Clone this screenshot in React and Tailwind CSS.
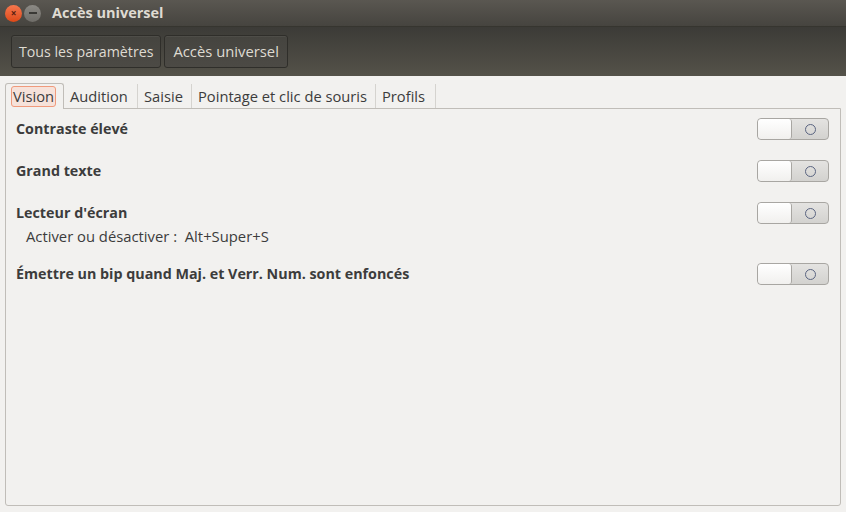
const rows = [
  { label: "Contraste élevé" },
  { label: "Grand texte" },
  { label: "Lecteur d'écran", sub: "Activer ou désactiver :  Alt+Super+S" },
  { label: "Émettre un bip quand Maj. et Verr. Num. sont enfoncés" },
];

const tabs = [
  { label: "Vision", w: "w-[59px]" },
  { label: "Audition", w: "w-[74px]" },
  { label: "Saisie", w: "w-[54px]" },
  { label: "Pointage et clic de souris", w: "w-[184px]" },
  { label: "Profils", w: "w-[60px]" },
];

function Toggle() {
  return (
    <div className="flex h-[22px] w-[72px] shrink-0 overflow-hidden rounded-[4px] border border-[#a8a6a2] bg-gradient-to-b from-[#e4e3e1] to-[#d3d2cf]">
      <div className="h-full w-[34px] rounded-[3px] border-r border-[#a8a6a2] bg-gradient-to-b from-white to-[#f1f0ee]" />
      <div className="flex flex-1 items-center justify-center">
        <span className="h-[11px] w-[11px] rounded-full border border-[#5a6480]" />
      </div>
    </div>
  );
}

export default function App() {
  return (
    <div
      className="flex h-[512px] w-[846px] flex-col bg-[#f2f1ef] text-[14px] text-[#3c3c3c]"
      style={{ fontFamily: '"Open Sans", "Noto Sans", sans-serif' }}
    >
      {/* title bar */}
      <div className="flex h-[26px] items-center bg-gradient-to-b from-[#5a5751] to-[#46443f] px-[5px]">
        <span className="flex h-[17px] w-[17px] items-center justify-center rounded-full bg-gradient-to-b from-[#f5774d] to-[#dd4814] text-[10px] font-bold leading-none text-[#5a2010]">
          ×
        </span>
        <span className="ml-[2px] flex h-[17px] w-[17px] items-center justify-center rounded-full bg-gradient-to-b from-[#8c8a85] to-[#6f6d68]">
          <span className="h-[1.5px] w-[8px] bg-[#3a3935]" />
        </span>
        <span className="ml-[11px] text-[14.5px] font-bold text-[#dfdbd2]">Accès universel</span>
      </div>

      {/* toolbar */}
      <div className="flex h-[50px] items-center gap-[3px] border-t border-[#36352f] bg-gradient-to-b from-[#3c3b37] to-[#545249] pl-[11px]">
        <button className="h-[33px] rounded-[3px] border border-[#2f2e2a] bg-gradient-to-b from-[#45443f] to-[#4c4a45] px-[7px] text-[14.2px] text-[#dfdbd2] shadow-[inset_0_1px_0_rgba(255,255,255,0.05)]">
          Tous les paramètres
        </button>
        <button className="h-[33px] rounded-[3px] border border-[#2f2e2a] bg-gradient-to-b from-[#45443f] to-[#4c4a45] px-[8px] text-[14.8px] text-[#dfdbd2] shadow-[inset_0_1px_0_rgba(255,255,255,0.05)]">
          Accès universel
        </button>
      </div>

      {/* tabs */}
      <div className="flex flex-1 flex-col px-[5px] pb-[6px] pt-[7px]">
        <div className="flex h-[25px] items-end text-[14.7px]">
          {tabs.map((t, i) =>
            i === 0 ? (
              <div
                key={t.label}
                className={`relative z-10 -mb-px flex h-[26px] ${t.w} items-center rounded-t-[3px] border border-b-0 border-[#c0bdb8] bg-[#f2f1ef] pl-[5px]`}
              >
                <span className="rounded-[3px] border border-[#f09a7c] bg-[#f6e2da] px-[1px] leading-[19px] text-[#3c3c3c]">
                  {t.label}
                </span>
              </div>
            ) : (
              <div
                key={t.label}
                className={`flex h-[24px] ${t.w} items-center border-r border-[#d5d3cf] pl-[6px] text-[#3c3c3c]`}
              >
                {t.label}
              </div>
            )
          )}
        </div>
        <div className="flex flex-1 flex-col rounded-b-[3px] border border-[#c0bdb8] pl-[10px] pr-[11px] pt-[9px]">
          {rows.map((r) => (
            <div
              key={r.label}
              className={`flex items-start justify-between ${r.sub ? "pb-[16px]" : "pb-[20px]"}`}
            >
              <div className="flex flex-col">
                <span className="text-[14.3px] font-bold leading-[22px]">{r.label}</span>
                {r.sub && (
                  <span className="mt-[1px] whitespace-pre pl-[10px] text-[14.8px] leading-[22px]">
                    {r.sub}
                  </span>
                )}
              </div>
              <Toggle />
            </div>
          ))}
        </div>
      </div>
    </div>
  );
}
